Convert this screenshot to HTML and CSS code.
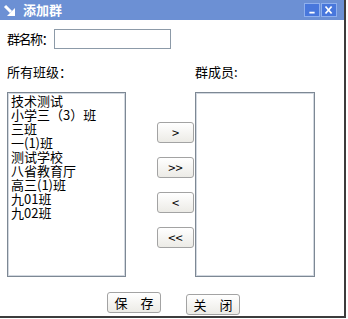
FILE: index.html
```html
<!DOCTYPE html>
<html lang="zh-CN">
<head>
    <meta charset="UTF-8">
    <title>添加群</title>
    <link rel="stylesheet" href="styles.css">
</head>
<body>
    <div class="window">
        <div class="titlebar">
            <svg class="title-icon" width="13" height="13" viewBox="0 0 13 13">
                <line x1="2" y1="2" x2="8" y2="8" stroke="#fff" stroke-width="3"/>
                <polygon points="12,4 12,12 4,12" fill="#fff"/>
            </svg>
            <span class="title-text">添加群</span>
            <div class="title-buttons">
                <span class="tbtn">
                    <svg width="16" height="14" viewBox="0 0 16 14"><rect x="5" y="9" width="6" height="2" fill="#fff"/></svg>
                </span>
                <span class="tbtn">
                    <svg width="16" height="14" viewBox="0 0 16 14"><path d="M4 3 L11 11 M11 3 L4 11" stroke="#fff" stroke-width="2"/></svg>
                </span>
            </div>
        </div>

        <div class="content">
            <div class="name-row">
                <label>群名称：</label>
                <input type="text" class="name-input">
            </div>

            <div class="labels-row">
                <span class="lbl-left">所有班级：</span>
                <span class="lbl-right">群成员:</span>
            </div>

            <div class="main-row">
                <div class="listbox">
                    <div>技术测试</div>
                    <div>小学三（3）班</div>
                    <div>三班</div>
                    <div>一(1)班</div>
                    <div>测试学校</div>
                    <div>八省教育厅</div>
                    <div>高三(1)班</div>
                    <div>九01班</div>
                    <div>九02班</div>
                </div>
                <div class="move-buttons">
                    <button class="btn move">&gt;</button>
                    <button class="btn move">&gt;&gt;</button>
                    <button class="btn move">&lt;</button>
                    <button class="btn move">&lt;&lt;</button>
                </div>
                <div class="listbox right"></div>
            </div>

            <div class="footer">
                <button class="btn big">保　存</button>
                <button class="btn big close">关　闭</button>
            </div>
        </div>
    </div>
</body>
</html>
```

FILE: styles.css
```css
* {
    box-sizing: border-box;
    margin: 0;
    padding: 0;
}

body {
    background-color: #fff;
    font-family: "Noto Sans CJK SC", "DejaVu Sans", sans-serif;
    font-size: 13px;
    color: #000;
}

.window {
    width: 346px;
    height: 318px;
    background-color: #fff;
    border-right: 2px solid #3c3c3c;
    border-bottom: 2px solid #3c3c3c;
    overflow: hidden;
}

.titlebar {
    height: 20px;
    background-color: #6c90d4;
    display: flex;
    align-items: center;
    padding-left: 3px;
}

.title-icon {
    display: block;
}

.title-text {
    color: #fff;
    font-weight: bold;
    font-size: 13px;
    line-height: 20px;
    margin-left: 7px;
}

.title-buttons {
    margin-left: auto;
    margin-right: 7px;
    display: flex;
    gap: 1px;
}

.tbtn {
    width: 16px;
    height: 14px;
    background-color: #4877dc;
    border: 1px solid #8fb0ee;
    display: flex;
    align-items: center;
    justify-content: center;
}

.tbtn svg {
    display: block;
}

.content {
    padding-left: 7px;
}

.name-row {
    display: flex;
    align-items: center;
    margin-top: 9px;
    height: 20px;
}

.name-row label {
    width: 47px;
    flex-shrink: 0;
    white-space: nowrap;
    letter-spacing: -1.5px;
    line-height: 20px;
}

.name-input {
    width: 117px;
    height: 20px;
    border: 1px solid #8c9aa8;
    outline: none;
}

.labels-row {
    display: flex;
    margin-top: 15px;
    line-height: 16px;
}

.lbl-left {
    width: 188px;
}

.main-row {
    display: flex;
    margin-top: 12px;
}

.listbox {
    width: 119px;
    height: 185px;
    border: 1px solid #7d8894;
    box-shadow: inset 0 0 0 1px #d2d8e0;
    padding: 1px 3px;
    line-height: 14px;
    font-size: 13px;
    color: #000;
}

.listbox.right {
    width: 120px;
    margin-left: 1px;
}

.move-buttons {
    display: flex;
    flex-direction: column;
    gap: 14px;
    margin-left: 31px;
    padding-top: 30px;
}

.btn {
    font-family: "Noto Sans CJK SC", "DejaVu Sans", sans-serif;
    font-size: 13px;
    color: #000;
    background: linear-gradient(#ffffff, #ecebe6);
    border: 1px solid #a3a3a3;
    border-radius: 3px;
    cursor: pointer;
}

.move {
    width: 37px;
    height: 21px;
    line-height: 18px;
}

.footer {
    display: flex;
    align-items: flex-start;
    margin-top: 15px;
    padding-left: 100px;
    gap: 25px;
}

.big {
    width: 54px;
    height: 21px;
    line-height: 18px;
}

.big.close {
    margin-top: 2px;
}
```
